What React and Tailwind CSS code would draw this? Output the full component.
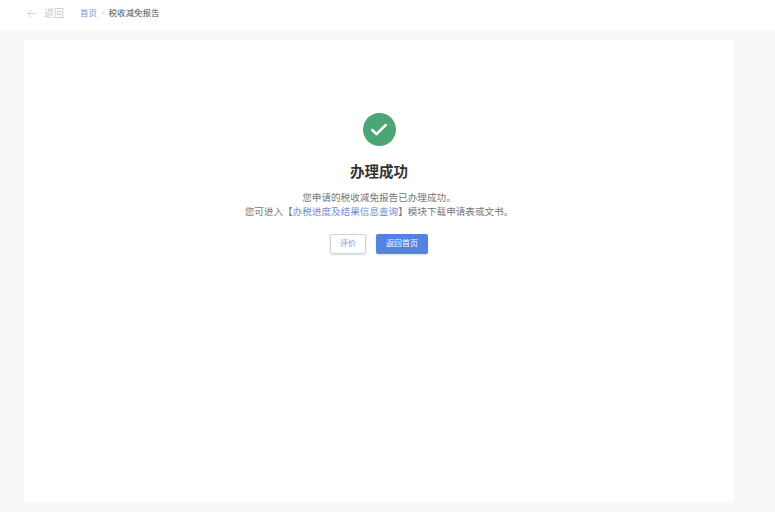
import React from 'react';
import { ArrowLeft, Check } from 'lucide-react';

const App = () => {
  return (
    <div className="w-[775px] h-[522px] overflow-hidden bg-[#f6f8fa] flex flex-col font-['Liberation_Sans','Noto_Sans_CJK_SC',sans-serif]">
      {/* Header */}
      <div className="h-[30px] shrink-0 bg-white flex items-center pl-[25px] pb-[3px] text-[8.5px]">
        <ArrowLeft className="w-[13px] h-[13px] text-[#c9ced6]" strokeWidth={1.5} />
        <span className="ml-[6px] text-[10px] text-[#c4c8cf]">返回</span>
        <span className="ml-[16px] text-[#7f93d8]">首页</span>
        <span className="mx-[4px] text-[6px] text-[#b5b9c0]">&gt;</span>
        <span className="text-[#555]">税收减免报告</span>
      </div>

      {/* Card */}
      <div className="ml-[24px] mt-[10px] w-[710px] h-[462px] shrink-0 bg-white flex flex-col items-center pt-[73px]">
        <div className="w-[33px] h-[33px] rounded-full bg-[#4ba575] flex items-center justify-center">
          <Check className="w-[20px] h-[20px] text-white" strokeWidth={3} />
        </div>
        <h1 className="mt-[15px] text-[14.5px] leading-[22px] font-bold text-[#333]">办理成功</h1>
        <p className="mt-[8px] text-[9.6px] leading-[14px] text-[#777] text-center">
          您申请的税收减免报告已办理成功。
          <br />
          您可进入【<span className="text-[#6f8fd8]">办税进度及结果信息查询</span>】模块下载申请表或文书。
        </p>
        <div className="mt-[15px] flex gap-[10px]">
          <button className="w-[36px] h-[20px] border border-[#ccd3e0] rounded-[2px] bg-white text-[8px] text-[#7f93d8] shadow-sm">评价</button>
          <button className="w-[52px] h-[20px] rounded-[2px] bg-[#5482e0] text-[8px] text-white shadow-sm">返回首页</button>
        </div>
      </div>

      {/* Bottom strip */}
      <div className="mt-[10px] flex-1 bg-white"></div>
    </div>
  );
};

export default App;
